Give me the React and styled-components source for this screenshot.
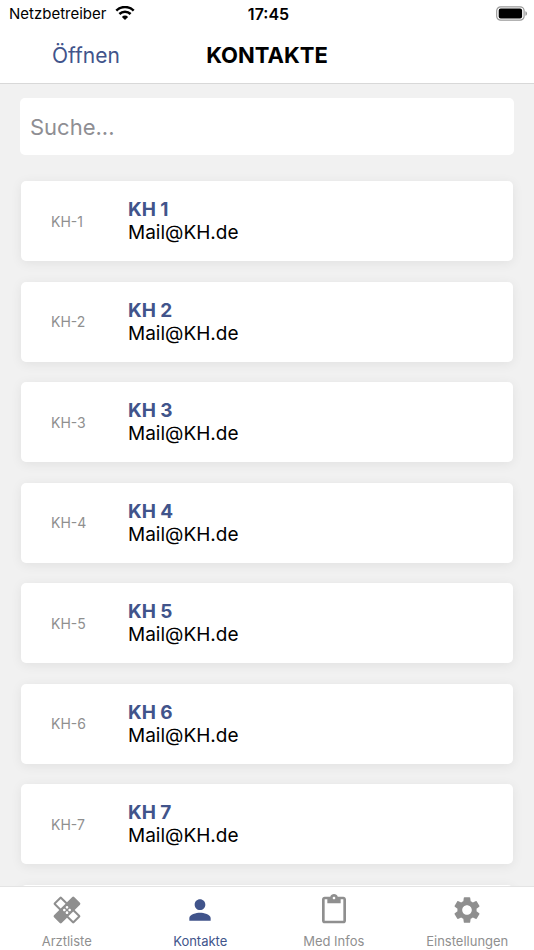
import React, { useState } from 'react'
import styled, { createGlobalStyle } from 'styled-components';
import { MdHealing, MdPerson, MdContentPaste, MdSettings } from 'react-icons/md';

const contacts = [1, 2, 3, 4, 5, 6, 7].map(n => ({
  id: `KH-${n}`,
  name: `KH ${n}`,
  mail: 'Mail@KH.de',
}));

const tabs = [
  { label: 'Arztliste', Icon: MdHealing },
  { label: 'Kontakte', Icon: MdPerson },
  { label: 'Med Infos', Icon: MdContentPaste },
  { label: 'Einstellungen', Icon: MdSettings },
];

export default function App() {
  const [search, setSearch] = useState('');
  const [active, setActive] = useState('Kontakte');

  const visible = contacts.filter(c => c.name.toLowerCase().includes(search.toLowerCase()));

  return (
    <Screen>
      <GlobalStyle/>
      <StatusBar>
        <Carrier>Netzbetreiber <Wifi/></Carrier>
        <Time>17:45</Time>
        <Battery/>
      </StatusBar>
      <Header>
        <OpenButton type="button">Öffnen</OpenButton>
        <Title>KONTAKTE</Title>
      </Header>
      <Content>
        <Search
          type="text"
          aria-label="Suche"
          placeholder="Suche..."
          value={search}
          onChange={e => setSearch(e.target.value)}
        />
        <List>
          {visible.map(c => <Contact key={c.id} {...c}/>)}
          <Card aria-hidden="true"/>
        </List>
      </Content>
      <TabBar>
        {tabs.map(({ label, Icon }) => (
          <Tab key={label} type="button" $active={label === active} onClick={() => setActive(label)}>
            <Icon size={32}/>
            {label}
          </Tab>
        ))}
      </TabBar>
    </Screen>
  )
}

const Contact = ({ id, name, mail }) => {
  return (
    <Card>
      <Id>{id}</Id>
      <div>
        <Name>{name}</Name>
        <Mail>{mail}</Mail>
      </div>
    </Card>
  )
}

const Wifi = () => (
  <svg width="20" height="15" viewBox="0 0 20 15" aria-hidden="true">
    <g fill="none" stroke="#000" strokeWidth="2.5">
      <path d="M1.3 4.6a12.4 12.4 0 0 1 17.4 0"/>
      <path d="M4.4 8a8 8 0 0 1 11.2 0"/>
    </g>
    <path d="M10 14.1l-3.1-3.2a4.4 4.4 0 0 1 6.2 0z"/>
  </svg>
)

const Battery = () => (
  <svg width="32" height="16" viewBox="0 0 32 16" aria-hidden="true">
    <rect x="0.7" y="0.8" width="27.4" height="13.4" rx="4" fill="none" stroke="#999" strokeWidth="1.2"/>
    <rect x="2.7" y="2.6" width="23.4" height="9.8" rx="2"/>
    <path d="M29.4 5.2c2.2.6 2.2 4 0 4.6z" fill="#999"/>
  </svg>
)

const GlobalStyle = createGlobalStyle`
  * {
    box-sizing: border-box;
  }
  body {
    margin: 0;
    font-family: Inter, "Liberation Sans", sans-serif;
    background: #f1f1f1;
  }
  button, input {
    font-family: inherit;
  }
`;

const Screen = styled.div`
  display: flex;
  flex-direction: column;
  height: 100vh;
`;

const StatusBar = styled.div`
  display: grid;
  grid-template-columns: 1fr auto 1fr;
  align-items: center;
  height: 27px;
  padding: 0 6px 0 9px;
  background: #fff;
  font-size: 15px;
  > :last-child {
    justify-self: end;
  }
`;

const Carrier = styled.div`
  display: flex;
  align-items: center;
  gap: 9px;
`;

const Time = styled.div`
  font-size: 16px;
  font-weight: 600;
`;

const Header = styled.header`
  display: grid;
  grid-template-columns: 1fr auto 1fr;
  align-items: center;
  height: 57px;
  background: #fff;
  border-bottom: 1px solid #d8d8d8;
`;

const OpenButton = styled.button`
  justify-self: start;
  margin-left: 52px;
  padding: 0;
  border: none;
  background: none;
  color: #41548b;
  font-size: 21px;
`;

const Title = styled.h1`
  margin: 0;
  font-size: 22px;
  font-weight: 700;
`;

const Content = styled.main`
  flex: 1;
  min-height: 0;
  overflow: auto;
  padding: 14px 10px 0;
  scrollbar-width: none;
`;

const Search = styled.input`
  display: block;
  width: calc(100% - 20px);
  height: 57px;
  margin: 0 10px 26px;
  padding: 0 10px;
  border: none;
  border-radius: 5px;
  background: #fff;
  font-size: 22px;
  &::placeholder {
    color: #8e8e93;
    opacity: 1;
  }
`;

const List = styled.ul`
  margin: 0;
  padding: 0;
  list-style: none;
`;

const Card = styled.li`
  display: flex;
  align-items: center;
  height: 80px;
  margin: 0 11px 4%;
  padding-left: 30px;
  border-radius: 5px;
  background: #fff;
  box-shadow: 0 2px 12px rgba(0, 0, 0, 0.07);
`;

const Id = styled.div`
  width: 77px;
  color: #8f8f8f;
  font-size: 14px;
`;

const Name = styled.div`
  color: #41548b;
  font-size: 19px;
  font-weight: 700;
  line-height: 23px;
`;

const Mail = styled.div`
  color: #000;
  font-size: 19px;
  line-height: 23px;
`;

const TabBar = styled.nav`
  display: flex;
  height: 64px;
  background: #fff;
  border-top: 1px solid #e4e4e4;
`;

const Tab = styled.button`
  flex: 1;
  display: flex;
  flex-direction: column;
  align-items: center;
  gap: 7px;
  padding: 7px 0 0;
  border: none;
  background: none;
  color: ${({ $active }) => $active ? '#41548b' : '#8f8f8f'};
  font-size: 13px;
`;
